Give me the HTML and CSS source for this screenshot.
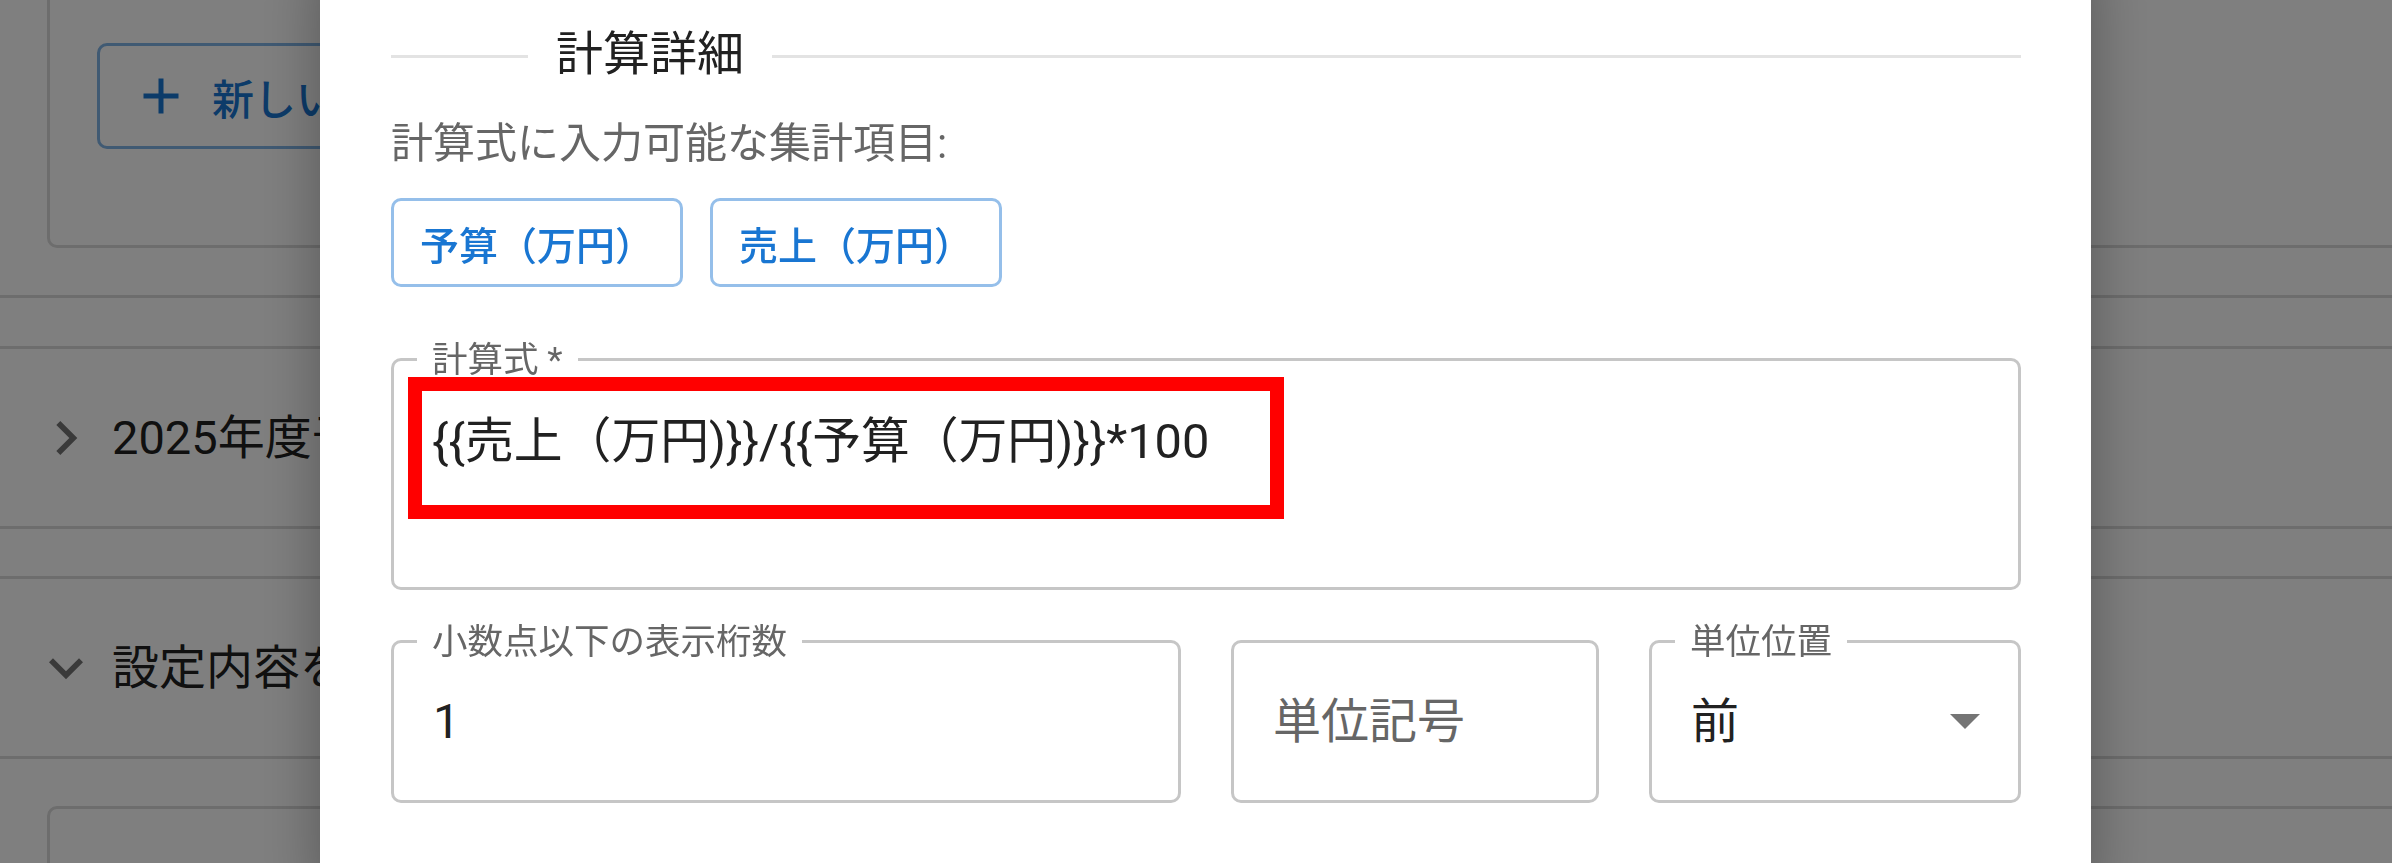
FILE: index.html
```html
<!DOCTYPE html>
<html lang="ja">
<head>
<meta charset="utf-8">
<title>計算詳細</title>
<link rel="stylesheet" href="styles.css">
</head>
<body>
<div class="app">
  <section class="card card-top">
    <button class="btn-outlined" type="button">
      <svg class="btn-icon" viewBox="0 0 24 24"><path d="M19 13h-6v6h-2v-6H5v-2h6V5h2v6h6v2z"/></svg>
      <span>新しい集計項目を追加</span>
    </button>
  </section>
  <div class="strip"></div>
  <div class="acc acc-first">
    <svg class="chev chev-right" viewBox="0 0 24 24"><path d="M16.59 8.59 12 13.17 7.41 8.59 6 10l6 6 6-6z"/></svg>
    <span class="acc-title">2025年度予算</span>
  </div>
  <div class="acc acc-second">
    <svg class="chev" viewBox="0 0 24 24"><path d="M16.59 8.59 12 13.17 7.41 8.59 6 10l6 6 6-6z"/></svg>
    <span class="acc-title">設定内容を確認</span>
  </div>
  <section class="card card-bottom"></section>
</div>

<div class="backdrop"></div>

<div class="dialog">
  <div class="divider">
    <span class="divider-line divider-line-left"></span>
    <span class="divider-title">計算詳細</span>
    <span class="divider-line"></span>
  </div>

  <p class="desc">計算式に入力可能な集計項目:</p>

  <div class="chips">
    <button class="chip" type="button">予算（万円）</button>
    <button class="chip" type="button">売上（万円）</button>
  </div>

  <div class="field field-formula">
    <span class="flabel">計算式 *</span>
    <div class="fvalue fvalue-formula">{{売上（万円)}}/{{予算（万円)}}*100</div>
    <div class="annot"></div>
  </div>

  <div class="row">
    <div class="field field-row">
      <span class="flabel">小数点以下の表示桁数</span>
      <div class="fvalue">1</div>
    </div>
    <div class="field field-row">
      <div class="fvalue fplaceholder">単位記号</div>
    </div>
    <div class="field field-row field-select">
      <span class="flabel">単位位置</span>
      <div class="fvalue">前</div>
      <svg class="select-arrow" viewBox="0 0 30 15"><polygon points="0,0 30,0 15,15"/></svg>
    </div>
  </div>
</div>
</body>
</html>
```

FILE: styles.css
```css
html, body {
  margin: 0;
  padding: 0;
  width: 100%;
  height: 100%;
  overflow: hidden;
  background: #ffffff;
  font-family: Roboto, "Noto Sans CJK JP", sans-serif;
  color: #212121;
}

/* ---------- background page ---------- */
.app {
  width: 100%;
}

.card {
  box-sizing: border-box;
  border: 3px solid #dadada;
  border-radius: 10px;
  background: #fff;
}

.card-top {
  margin: -20px -60px 0 47px;
  height: 268px;
  padding: 60px 0 0 47px;
}

.btn-outlined {
  display: flex;
  align-items: center;
  height: 106px;
  box-sizing: border-box;
  padding: 0 40px 0 31px;
  border: 3px solid rgba(25, 118, 210, 0.55);
  border-radius: 10px;
  background: transparent;
  color: #1976d2;
  font-family: Roboto, "Noto Sans CJK JP", sans-serif;
  font-size: 42px;
  font-weight: 500;
}

.btn-icon {
  width: 60px;
  height: 60px;
  fill: #1976d2;
  margin-right: 21px;
}

.strip {
  box-sizing: border-box;
  margin-top: 47px;
  height: 54px;
  border-top: 3px solid #dadada;
  border-bottom: 3px solid #dadada;
}

.acc {
  box-sizing: border-box;
  display: flex;
  align-items: center;
  padding-left: 32px;
  border-bottom: 3px solid #dadada;
}

.acc-first {
  height: 180px;
}

.acc-second {
  margin-top: 47px;
  height: 183px;
  border-top: 3px solid #dadada;
}

.chev {
  width: 68px;
  height: 68px;
  fill: #757575;
  flex: none;
  margin-right: 12px;
}

.chev-right {
  transform: rotate(-90deg);
}

.acc-title {
  font-size: 47px;
  line-height: 60px;
  color: #212121;
  white-space: nowrap;
}

.card-bottom {
  margin: 47px -60px 0 47px;
  height: 200px;
}

/* ---------- backdrop & dialog ---------- */
.backdrop {
  position: fixed;
  inset: 0;
  background: rgba(0, 0, 0, 0.5);
  z-index: 1;
}

.dialog {
  position: fixed;
  z-index: 2;
  left: 320px;
  top: -40px;
  bottom: -40px;
  width: 1771px;
  box-sizing: border-box;
  padding: 66px 70px 0 71px;
  background: #fff;
  border-radius: 10px;
  box-shadow: 0 0 60px rgba(0, 0, 0, 0.32);
}

.divider {
  display: flex;
  align-items: center;
  height: 60px;
}

.divider-line {
  flex: 1;
  height: 3px;
  background: #e3e3e3;
}

.divider-line-left {
  flex: 0 0 137px;
}

.divider-title {
  font-size: 47px;
  line-height: 60px;
  padding: 0 28px 4px 28px;
  color: #212121;
  white-space: nowrap;
}

.desc {
  margin: 28px 0 0 0;
  font-size: 42px;
  line-height: 60px;
  color: #666666;
}

.chips {
  display: flex;
  gap: 27px;
  margin-top: 24px;
}

.chip {
  box-sizing: border-box;
  height: 89px;
  padding: 0 26px;
  border: 3px solid #95bfea;
  border-radius: 10px;
  background: #fff;
  color: #1976d2;
  font-family: Roboto, "Noto Sans CJK JP", sans-serif;
  font-size: 39px;
  font-weight: 500;
  white-space: nowrap;
}

.field {
  position: relative;
  box-sizing: border-box;
  border: 3px solid #c6c6c6;
  border-radius: 10px;
  background: #fff;
}

.field-formula {
  margin-top: 71px;
  height: 232px;
  padding: 51px 39px 0 38px;
}

.flabel {
  position: absolute;
  left: 23px;
  top: -21.5px;
  padding: 0 15px;
  background: #fff;
  font-size: 35.5px;
  line-height: 40px;
  color: #666666;
  white-space: nowrap;
}

.fvalue {
  font-size: 48px;
  line-height: 60px;
  color: #212121;
  white-space: nowrap;
}

.fvalue-formula {
  font-size: 48.8px;
}

.fplaceholder {
  color: #666666;
}

.annot {
  position: absolute;
  left: 14px;
  top: 16px;
  width: 876px;
  height: 142px;
  box-sizing: border-box;
  border: 14px solid #ff0000;
}

.row {
  display: grid;
  grid-template-columns: 790px 368px 1fr;
  gap: 50px;
  margin-top: 50px;
}

.field-row {
  height: 163px;
  display: flex;
  align-items: center;
  padding: 0 38px 0 39px;
}

.field-select {
  justify-content: space-between;
}

.select-arrow {
  width: 30px;
  height: 15px;
  fill: #757575;
}
```
